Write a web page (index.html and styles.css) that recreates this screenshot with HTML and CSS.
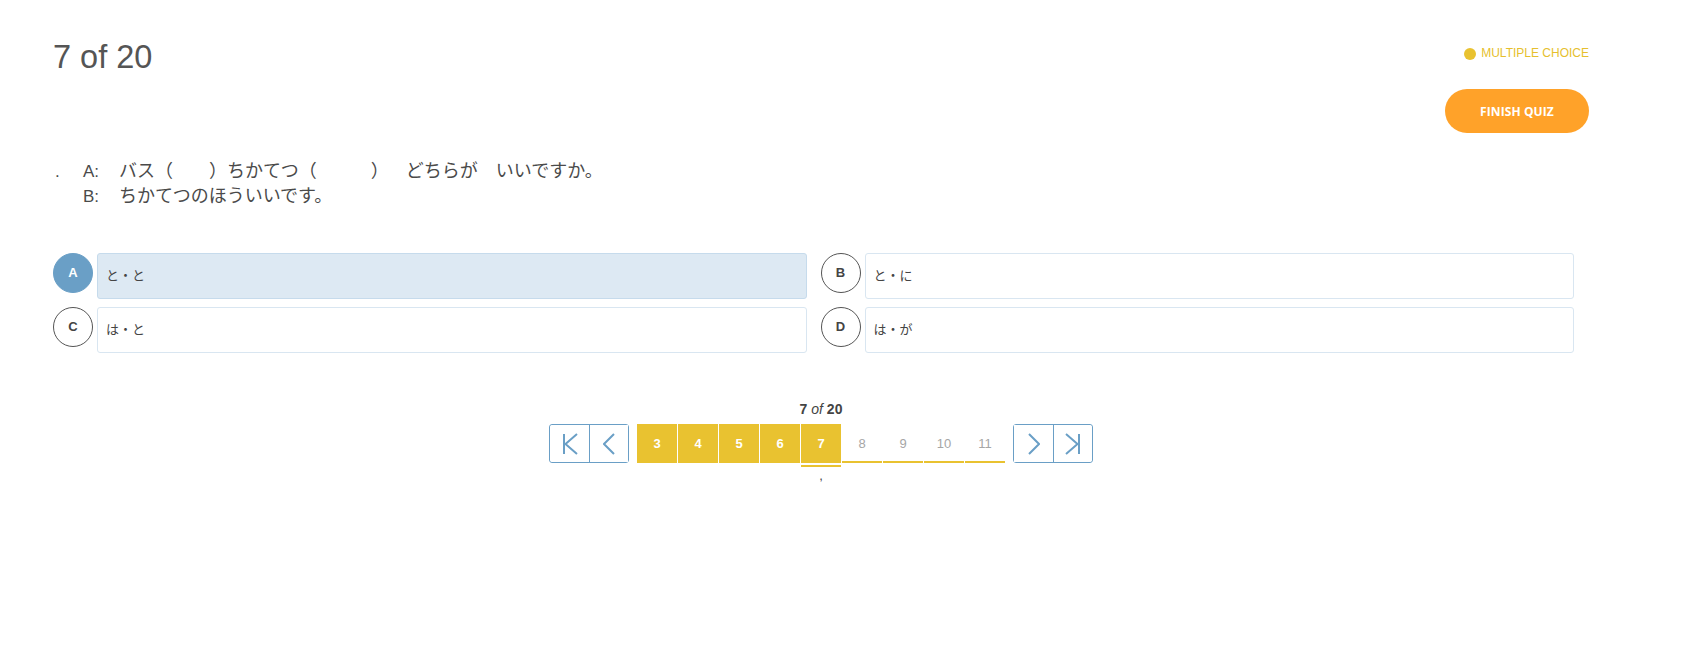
FILE: index.html
```html
<!DOCTYPE html>
<html lang="ja">
<head>
<meta charset="utf-8">
<title>Quiz</title>
<link rel="stylesheet" href="styles.css">
</head>
<body>
<div class="page">
  <header class="top">
    <h1 class="count">7 of 20</h1>
    <div class="side">
      <div class="type"><span class="dot"></span>MULTIPLE CHOICE</div>
      <button class="finish">FINISH QUIZ</button>
    </div>
  </header>

  <div class="question">
    <span class="qnum">.</span>
    <div class="lines">
      <div class="line"><span class="who">A:</span><span class="jp">バス（　　）ちかてつ（　　　）　&nbsp;&nbsp;どちらが　いいですか。</span></div>
      <div class="line"><span class="who">B:</span><span class="jp">ちかてつのほういいです。</span></div>
    </div>
  </div>

  <div class="options">
    <div class="option selected"><span class="letter">A</span><div class="answer">と・と</div></div>
    <div class="option"><span class="letter">B</span><div class="answer">と・に</div></div>
    <div class="option"><span class="letter">C</span><div class="answer">は・と</div></div>
    <div class="option"><span class="letter">D</span><div class="answer">は・が</div></div>
  </div>

  <div class="pager">
    <div class="pager-label"><b>7</b> <i>of</i> <b>20</b></div>
    <div class="pager-row">
      <div class="nav">
        <button class="nav-btn"><svg width="16" height="22" viewBox="0 0 16 22"><path d="M2 1V21M15 1L3.5 11L15 21" fill="none" stroke="#6a9fc6" stroke-width="2"/></svg></button>
        <button class="nav-btn"><svg width="12" height="22" viewBox="0 0 12 22"><path d="M11 1L1 11L11 21" fill="none" stroke="#6a9fc6" stroke-width="2"/></svg></button>
      </div>
      <div class="pages">
        <span class="pg done">3</span>
        <span class="pg done">4</span>
        <span class="pg done">5</span>
        <span class="pg done">6</span>
        <span class="pg done current">7</span>
        <span class="pg">8</span>
        <span class="pg">9</span>
        <span class="pg">10</span>
        <span class="pg">11</span>
      </div>
      <div class="nav">
        <button class="nav-btn"><svg width="12" height="22" viewBox="0 0 12 22"><path d="M1 1L11 11L1 21" fill="none" stroke="#6a9fc6" stroke-width="2"/></svg></button>
        <button class="nav-btn"><svg width="16" height="22" viewBox="0 0 16 22"><path d="M14 1V21M1 1L12.5 11L1 21" fill="none" stroke="#6a9fc6" stroke-width="2"/></svg></button>
      </div>
    </div>
    <div class="pager-note">,</div>
  </div>
</div>
</body>
</html>
```

FILE: styles.css
```css
* { box-sizing: border-box; }

html, body {
  margin: 0;
  padding: 0;
  background: #ffffff;
}

body {
  font-family: "Liberation Sans", "Noto Sans CJK JP", sans-serif;
  color: #4a4a4a;
}

.page {
  width: 1704px;
  padding: 0 115px 0 53px;
}

.top {
  display: flex;
  justify-content: space-between;
  align-items: flex-start;
}

.count {
  margin: 39px 0 0;
  font-family: "Liberation Sans", sans-serif;
  font-weight: 400;
  font-size: 32.5px;
  line-height: 37px;
  color: #555555;
}

.side {
  display: flex;
  flex-direction: column;
  align-items: flex-end;
  padding-top: 46px;
}

.type {
  display: flex;
  align-items: center;
  gap: 5px;
  font-family: "Liberation Sans", sans-serif;
  font-size: 12px;
  line-height: 15px;
  color: #e6bf2e;
}

.dot {
  width: 12px;
  height: 12px;
  border-radius: 50%;
  background: #e9c230;
}

.finish {
  margin-top: 28px;
  width: 144px;
  height: 44px;
  border: none;
  border-radius: 22px;
  background: #ffa229;
  color: #ffffff;
  font-family: "Open Sans", sans-serif;
  font-weight: 700;
  font-size: 12px;
  letter-spacing: 0.1px;
  padding: 0;
}

.question {
  display: flex;
  align-items: baseline;
  margin-top: 25px;
  font-size: 18px;
  line-height: 23px;
  color: #4a4a4a;
}

.qnum {
  width: 30px;
  padding-left: 2px;
  font-size: 17px;
}

.line {
  display: flex;
  align-items: baseline;
}

.who {
  width: 36px;
  font-family: "Liberation Sans", sans-serif;
  font-size: 17px;
}

.jp {
  font-family: "Noto Sans CJK JP", sans-serif;
  font-size: 18px;
}

.options {
  margin-top: 45px;
  margin-right: 15px;
  display: grid;
  grid-template-columns: 1fr 1fr;
  column-gap: 14px;
  row-gap: 8px;
}

.option {
  display: flex;
  align-items: flex-start;
  gap: 4px;
}

.letter {
  flex: none;
  width: 40px;
  height: 40px;
  border-radius: 50%;
  border: 1px solid #555555;
  display: flex;
  align-items: center;
  justify-content: center;
  font-family: "Liberation Sans", sans-serif;
  font-weight: 700;
  font-size: 13px;
  color: #444444;
  padding-bottom: 1px;
}

.answer {
  flex: 1;
  height: 46px;
  border: 1px solid #d9e6f1;
  border-radius: 3px;
  background: #ffffff;
  display: flex;
  align-items: center;
  padding: 0 0 3px 8px;
  font-family: "Noto Sans CJK JP", sans-serif;
  font-size: 13px;
  color: #444444;
}

.option.selected .letter {
  background: #6a9fc6;
  border-color: #6a9fc6;
  color: #ffffff;
}

.option.selected .answer {
  background: #dde9f3;
  border-color: #c6dbec;
}

.pager {
  display: flex;
  flex-direction: column;
  align-items: center;
  margin-top: 48px;
}

.pager-label {
  font-family: "Liberation Sans", sans-serif;
  font-size: 14px;
  line-height: 17px;
  color: #444444;
}

.pager-label b { font-weight: 700; }
.pager-label i { font-style: italic; }

.pager-row {
  margin-top: 6px;
  display: flex;
  gap: 8px;
}

.nav {
  display: flex;
  border: 1px solid #6a9fc6;
  border-radius: 3px;
  height: 39px;
}

.nav-btn {
  width: 39px;
  height: 37px;
  border: none;
  background: #ffffff;
  padding: 0;
  display: flex;
  align-items: center;
  justify-content: center;
}

.nav-btn + .nav-btn {
  border-left: 1px solid #6a9fc6;
}

.nav:first-child .nav-btn:first-child { border-radius: 3px 0 0 3px; }
.nav:last-child .nav-btn:last-child { border-radius: 0 3px 3px 0; }

.pages {
  display: flex;
  gap: 1px;
}

.pg {
  width: 40px;
  height: 39px;
  display: flex;
  align-items: center;
  justify-content: center;
  border-bottom: 2px solid #e9c230;
  font-family: "Liberation Sans", sans-serif;
  font-size: 13px;
  color: #a6a6a6;
  padding-top: 1px;
}

.pg.done {
  background: #e9c230;
  color: #ffffff;
  font-weight: 700;
}

.pg.current {
  box-shadow: 0 2px 0 #ffffff, 0 4px 0 #e9c230;
}

.pager-note {
  margin-top: 5px;
  font-family: "Liberation Sans", sans-serif;
  font-size: 13px;
  line-height: 16px;
  color: #444444;
}
```
